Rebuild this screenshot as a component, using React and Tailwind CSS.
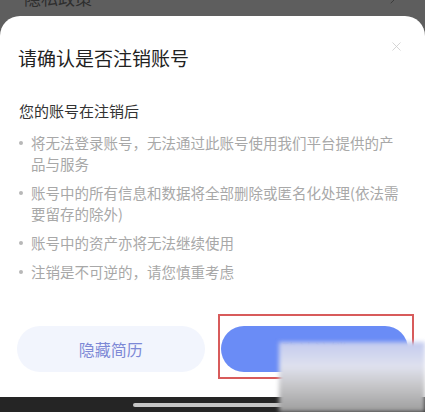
import React from "react";
import { ChevronRight, X } from "lucide-react";

const items = [
  "将无法登录账号，无法通过此账号使用我们平台提供的产品与服务",
  "账号中的所有信息和数据将全部删除或匿名化处理(依法需要留存的除外)",
  "账号中的资产亦将无法继续使用",
  "注销是不可逆的，请您慎重考虑",
];

export default function App() {
  return (
    <div
      className="flex h-[412px] w-[425px] flex-col overflow-hidden bg-[#5e5e5e]"
      style={{ fontFamily: '"Noto Sans CJK SC", "Noto Sans", sans-serif' }}
    >
      {/* dimmed page behind the sheet */}
      <div className="flex h-[16px] shrink-0 items-start justify-between overflow-hidden pl-[24px] pr-[24px]">
        <span className="-mt-[13px] text-[17px] leading-[22px] text-[#2e2e2e]">隐私政策</span>
        <ChevronRight className="-mt-[9px] h-[16px] w-[16px] text-[#3d3d3d]" strokeWidth={1.5} />
      </div>

      {/* bottom sheet */}
      <div className="flex flex-1 flex-col rounded-t-[20px] bg-white">
        <div className="flex items-start justify-between pl-[18px] pr-[21px] pt-[28px]">
          <h1 className="text-[19px] font-normal leading-[28px] text-[#222]">请确认是否注销账号</h1>
          <X className="mt-[-5px] h-[15px] w-[15px] text-[#cccccc]" strokeWidth={1.3} />
        </div>

        <p className="mt-[28px] pl-[19px] text-[15px] leading-[22px] text-[#333]">您的账号在注销后</p>

        <ul className="mt-[10px] flex flex-col gap-[8px] pl-[19px] pr-[22px]">
          {items.map((t) => (
            <li key={t} className="flex items-start">
              <span className="mt-[9px] mr-[8px] h-[4px] w-[4px] shrink-0 rounded-full bg-[#b8b8b8]" />
              <span className="text-[14.5px] leading-[21px] text-[#a8a8a8]">{t}</span>
            </li>
          ))}
        </ul>

        <div className="mt-auto flex gap-[16px] px-[17px] pb-[25px]">
          <button className="h-[46px] flex-1 rounded-full bg-[#f2f5fd] text-[16px] text-[#7d89d6]">
            隐藏简历
          </button>
          <div className="relative flex-1">
            <button className="h-[46px] w-full rounded-full bg-[#6a8cf6] text-[16px] text-[#5d7de6]">
              确认注销
            </button>
            <div className="absolute -left-[3px] -right-[6px] -top-[12px] -bottom-[7px] border-2 border-[#d85b5b]" />
          </div>
        </div>
      </div>

      {/* system navigation bar */}
      <div className="flex h-[15px] shrink-0 items-start justify-center bg-[#252525] pt-[6px]">
        <div className="h-[4px] w-[160px] rounded-full bg-[#c6c6c6]" />
      </div>

      {/* blurred watermark patch */}
      <div className="absolute left-[279px] top-[342px] h-[70px] w-[146px] bg-[linear-gradient(180deg,#c3cbef_0%,#dfe1ee_35%,#c9c9cc_60%,#9d9d9d_100%)] blur-[2px]" />
    </div>
  );
}
